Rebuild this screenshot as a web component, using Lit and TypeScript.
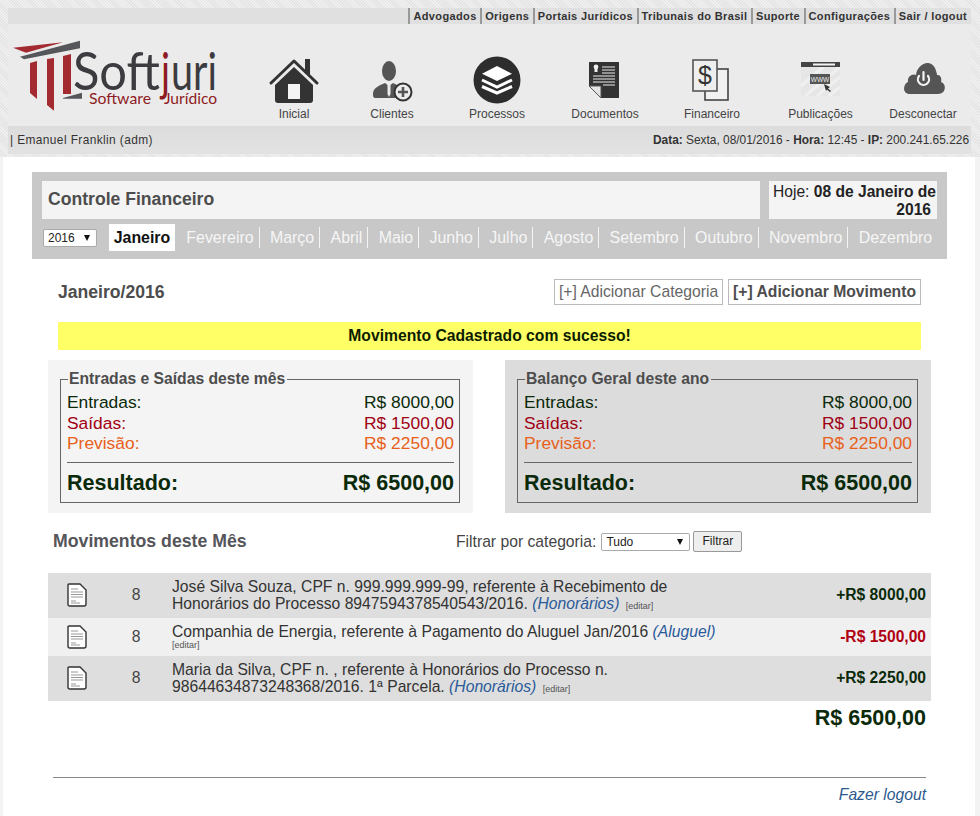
import { LitElement, html, css, svg } from 'lit';
import { customElement } from 'lit/decorators.js';

const topLinks = ['Advogados', 'Origens', 'Portais Jurídicos', 'Tribunais do Brasil', 'Suporte', 'Configurações', 'Sair / logout'];
const months = ['Fevereiro', 'Março', 'Abril', 'Maio', 'Junho', 'Julho', 'Agosto', 'Setembro', 'Outubro', 'Novembro', 'Dezembro'];

const logo = svg`
   <svg class="logo" viewBox="0 30 240 90" width="240" height="90">
      <polygon points="13,47.7 63,42.3 26,52.7" fill="#a32a30" />
      <polygon points="20,56.7 80,40.7 80,48.3 24,59.3" fill="#55565a" />
      <polygon points="30,63 37,61 37,99 30,93" fill="#a32a30" />
      <polygon points="47,59 54,58 54,110.7 47,105" fill="#a32a30" />
      <polygon points="63,56 71,54 71,94 63,94" fill="#a32a30" />
      <polygon points="63,98 82,92.7 82,98.7 63,98.7" fill="#55565a" />
      <g font-family="Lato, 'Open Sans', sans-serif" font-weight="400">
         <text x="73" y="90" font-size="53" fill="#3c3c40" textLength="87" lengthAdjust="spacingAndGlyphs">Soft</text>
         <text x="161" y="90" font-size="53" fill="#8e1c24" textLength="9" lengthAdjust="spacingAndGlyphs">j</text>
         <text x="171" y="90" font-size="53" fill="#3c3c40" textLength="46" lengthAdjust="spacingAndGlyphs">uri</text>
         <text x="89" y="103.5" font-size="16" fill="#8e1c24" textLength="62" lengthAdjust="spacingAndGlyphs">Software</text>
         <text x="164" y="103.5" font-size="16" fill="#8e1c24" textLength="53" lengthAdjust="spacingAndGlyphs">Jurídico</text>
      </g>
   </svg>
`;

// all nav icons use a 60x50 box, centred over the label
const navIcons = {
   home: svg`
      <path d="M7 29 L30 7 L53 29" fill="none" stroke="#333" stroke-width="3" stroke-linecap="round" stroke-linejoin="round" />
      <rect x="41" y="5" width="5" height="15" fill="#333" />
      <path d="M30 13 L49 31 V46 Q49 49 46 49 H14 Q11 49 11 46 V31 Z" fill="#333" />
      <rect x="24" y="30" width="12" height="15" fill="#f4f4f4" />
   `,
   client: svg`
      <ellipse cx="27" cy="17" rx="7" ry="10" fill="#555" />
      <path d="M11 40 C11 33 19 31 23 29 L27 32 L31 29 C35 31 37 32 39 33 C34 36 33 41 34 44 H14 C11 44 11 42 11 40 Z" fill="#555" />
      <path d="M25.5 30 L28.5 30 L28.5 40 L27 43 L25.5 40 Z" fill="#ebebeb" />
      <circle cx="41" cy="38" r="8.5" fill="#ebebeb" stroke="#333" stroke-width="2" />
      <path d="M41 33 V43 M36 38 H46" stroke="#555" stroke-width="2.6" />
   `,
   process: svg`
      <circle cx="30" cy="26" r="23.5" fill="#2d2d2d" />
      <polygon points="30,12 45,19.7 30,27 15,19.7" fill="#fff" />
      <polyline points="15,26 30,33 45,26" fill="none" stroke="#fff" stroke-width="3" />
      <polyline points="15,32.5 30,39 45,32.5" fill="none" stroke="#fff" stroke-width="3" />
   `,
   doc: svg`
      <g transform="translate(-1 -1)">
         <polygon points="15,9 45,9 45,45 27,45 15,33" fill="#333" />
         <polygon points="15,33 27,33 27,45" fill="#e4e4e4" stroke="#555" stroke-width="1" />
         <circle cx="22" cy="14" r="2.4" fill="#eee" />
         <rect x="20.5" y="16" width="3" height="3" fill="#eee" />
         <path d="M28 14 H41 M28 17 H41 M28 20 H41 M19 23 H41 M19 26 H41 M19 29 H41 M29 32 H41" stroke="#eee" stroke-width="1.1" />
      </g>
   `,
   money: svg`
      <rect x="23" y="15" width="23" height="31" fill="#f1f1f1" stroke="#444" stroke-width="1.6" />
      <rect x="11" y="6" width="24" height="31" fill="#eee" stroke="#555" stroke-width="1.6" />
      <text x="23" y="30" font-size="25" text-anchor="middle" font-family="'Liberation Sans', sans-serif" fill="#333">$</text>
   `,
   web: svg`
      <rect x="10" y="8" width="39" height="34" fill="#e6e6e6" />
      <path d="M14 42 L49 13 M10 32 L38 8 M26 42 L49 23 M38 42 L49 33" stroke="#f0f0f0" stroke-width="3" />
      <rect x="10" y="8" width="39" height="5" fill="#444" />
      <rect x="22" y="9.5" width="22" height="2" fill="#f4f4f4" />
      <rect x="19" y="20" width="20" height="10" fill="#555" />
      <text x="29" y="27.5" font-size="6.5" text-anchor="middle" font-family="'Liberation Sans', sans-serif" fill="#eee">WWW</text>
      <path d="M33 30 L39 33 L37 34.5 L40 37 L39 38 L36 35.5 L35 37 Z" fill="#333" />
   `,
   cloud: svg`
      <path d="M17 40 C9 40 10 30 15 28 C14 22 20 19 23 21 C24 10 37 4 42 14 C43 17 44 19 44 21 C48 20 49 26 48 28 C54 30 53 40 45 40 Z" fill="#555" />
      <path d="M26 22 A5.6 5.6 0 1 0 35 22" fill="none" stroke="#f4f4f4" stroke-width="2.2" stroke-linecap="round" />
      <path d="M30.5 18 V26" stroke="#f4f4f4" stroke-width="2.2" stroke-linecap="round" />
   `,
};

const navItems = [
   { label: 'Inicial', icon: navIcons.home },
   { label: 'Clientes', icon: navIcons.client },
   { label: 'Processos', icon: navIcons.process },
   { label: 'Documentos', icon: navIcons.doc },
   { label: 'Financeiro', icon: navIcons.money },
   { label: 'Publicações', icon: navIcons.web },
   { label: 'Desconectar', icon: navIcons.cloud },
];

const rowIcon = svg`
   <svg class="row-icon" viewBox="0 0 22 26" width="22" height="26">
      <path d="M3 2 H14 L20 8 V22 Q20 24 18 24 H4 Q2 24 2 22 V3 Q2 2 3 2 Z" fill="#fff" stroke="#333" stroke-width="1.4" />
      <path d="M5 7 H12 M5 10 H17 M5 12.5 H17 M5 15 H17 M5 19 H10 M5 21 H14" stroke="#999" stroke-width="1.1" />
   </svg>
`;

// first is the line above the one that carries the category, when there are two
const moves = [
   { first: 'José Silva Souza, CPF n. 999.999.999-99, referente à Recebimento de', text: 'Honorários do Processo 8947594378540543/2016.', cat: 'Honorários', value: '+R$ 8000,00', out: false },
   { first: '', text: 'Companhia de Energia, referente à Pagamento do Aluguel Jan/2016', cat: 'Aluguel', value: '-R$ 1500,00', out: true },
   { first: 'Maria da Silva, CPF n. , referente à Honorários do Processo n.', text: '98644634873248368/2016. 1ª Parcela.', cat: 'Honorários', value: '+R$ 2250,00', out: false },
];

@customElement('app-root')
export class AppRoot extends LitElement {
   static styles = css`
      :host {
         display: block;
         width: 980px;
         min-height: 816px;
         background-color: #f3f3f3;
         font-family: 'Liberation Sans', Arial, sans-serif;
         font-size: 15.7px;
         color: #333;
      }
      .header-wrap {
         padding: 8px 9px 3px 8px;
         background: repeating-linear-gradient(45deg, #e4e4e4 0 1px, #f0f0f0 1px 2px);
      }
      .top-links {
         display: flex;
         justify-content: flex-end;
         height: 16px;
         padding-right: 0.5px;
         background-color: #e0e0e0;
      }
      .top-links a {
         padding: 0 3.5px 0 3px;
         border-left: 2px solid #999;
         font-size: 11px;
         font-weight: bold;
         letter-spacing: 0.36px;
         line-height: 16px;
         color: #333;
      }
      .main-head {
         display: flex;
         height: 102px;
         background-color: #ebebeb;
      }
      .logo {
         display: block;
         flex: none;
         margin: 6px 5px 0 -8px;
      }
      .nav {
         flex: none;
         display: grid;
         grid-template-columns: 98px 98px 112px 104px 110px 107px 98px;
      }
      .nav-item {
         display: flex;
         flex-direction: column;
         align-items: center;
         font-size: 12px;
         color: #444;
      }
      .nav-item svg {
         display: block;
         margin-top: 30px;
         margin-bottom: 3px;
      }
      .user-bar {
         display: flex;
         justify-content: space-between;
         align-items: center;
         height: 28px;
         padding: 0 2px;
         background: linear-gradient(#dcdcdc, #e2e2e2);
         font-size: 11.9px;
         color: #333;
      }
      .user-name {
         letter-spacing: 0.4px;
      }
      .content {
         margin: 0 5px 0 3px;
         padding: 15px 44px 0 45px;
         background-color: #fff;
         height: 659px;
         box-sizing: border-box;
      }
      .card {
         margin: 0 -16px;
         padding: 9px 10px 8px 10px;
         background-color: #c8c8c8;
      }
      .card-top {
         display: flex;
         gap: 9px;
      }
      .card-title {
         flex: 1;
         height: 38px;
         padding-left: 6px;
         background-color: #f4f4f4;
         font-size: 17.6px;
         font-weight: bold;
         line-height: 36px;
         color: #4d4d4d;
      }
      .card-today {
         width: 163px;
         height: 36px;
         padding: 2px 1px 0 4px;
         background-color: #f4f4f4;
         font-size: 15.6px;
         line-height: 18px;
         text-align: right;
         color: #222;
      }
      .card-today span {
         display: block;
         padding-right: 5px;
         font-weight: bold;
      }
      .card-today div {
         white-space: nowrap;
      }
      .months {
         display: flex;
         align-items: center;
         height: 27px;
         margin-top: 5px;
         padding-left: 1px;
      }
      .fake-select {
         position: relative;
         flex: none;
         display: block;
         box-sizing: border-box;
         height: 18px;
         background-color: #fff;
         border: 1px solid #aaa;
         border-radius: 2px;
         font-size: 12px;
         line-height: 16px;
         padding-left: 4px;
         color: #222;
      }
      .fake-select::after {
         content: '';
         position: absolute;
         right: 6px;
         top: 5px;
         border-left: 3.5px solid transparent;
         border-right: 3.5px solid transparent;
         border-top: 6px solid #111;
      }
      .year {
         width: 54px;
         margin-right: 12px;
      }
      .tab {
         flex: none;
         width: 66px;
         height: 27px;
         margin-right: 1px;
         background-color: #fff;
         font-weight: bold;
         font-size: 15.9px;
         line-height: 28px;
         text-align: center;
         color: #111;
      }
      .month {
         flex: none;
         height: 21px;
         padding: 0 5px 0 10.3px;
         border-right: 1px solid #f4f4f4;
         font-size: 15.95px;
         line-height: 22px;
         color: #f6f6f6;
      }
      .month:last-child {
         border-right: none;
      }
      .period {
         display: flex;
         justify-content: space-between;
         align-items: center;
         height: 26px;
         margin: 20px 10px 0 10px;
      }
      .period h2 {
         margin: 0;
         font-size: 17.6px;
         color: #4d4d4d;
      }
      .actions {
         display: flex;
         gap: 5px;
      }
      .action {
         box-sizing: border-box;
         height: 26px;
         padding: 0 4px;
         border: 1px solid #bbb;
         font-size: 15.7px;
         line-height: 24px;
         color: #666;
      }
      .action.strong {
         font-weight: bold;
         color: #4d4d4d;
      }
      .notice {
         height: 28px;
         margin: 17px 10px 0 10px;
         background-color: #ffff66;
         font-size: 15.7px;
         font-weight: bold;
         line-height: 27px;
         text-align: center;
         color: #0c1c00;
      }
      .panels {
         display: flex;
         justify-content: space-between;
         margin-top: 10px;
      }
      .panel {
         width: 425px;
         box-sizing: border-box;
         padding: 10px 13px 10px 12px;
         background-color: #f4f4f4;
      }
      .panel.dark {
         width: 426px;
         background-color: #dcdcdc;
      }
      fieldset {
         margin: 0;
         min-width: 0;
         padding: 6px 5px 4px 6px;
         border: 1.5px solid #666;
      }
      legend {
         padding: 0 2px 0 1px;
         margin-left: 1px;
         margin-bottom: -2px;
         font-size: 15.7px;
         font-weight: bold;
         line-height: 18.1px;
         color: #4d4d4d;
      }
      .line {
         display: flex;
         justify-content: space-between;
         font-size: 17.4px;
         line-height: 20.5px;
      }
      .in {
         color: #0a2a0a;
      }
      .out {
         color: #a00012;
      }
      .plan {
         color: #e8601a;
      }
      .result {
         display: flex;
         justify-content: space-between;
         margin-top: 8px;
         padding-top: 5px;
         border-top: 1px solid #666;
         font-size: 21.5px;
         font-weight: bold;
         line-height: 30px;
         color: #0a2a0a;
      }
      .moves-head {
         display: flex;
         align-items: center;
         height: 22px;
         margin-top: 18px;
         padding-left: 5px;
      }
      .moves-head h2 {
         flex: none;
         width: 403px;
         margin: 0;
         font-size: 17.7px;
         color: #55555a;
      }
      .filter {
         display: flex;
         align-items: center;
         font-size: 15.7px;
         color: #444;
      }
      .cat {
         width: 89px;
         margin-left: 5px;
         margin-right: 3px;
      }
      .filter-btn {
         box-sizing: border-box;
         height: 21px;
         width: 49px;
         border: 1px solid #999;
         border-radius: 2px;
         background-color: #eee;
         font-size: 12px;
         line-height: 19px;
         text-align: center;
         color: #222;
      }
      .rows {
         margin-top: 20px;
      }
      .row {
         display: grid;
         grid-template-columns: 58px 60px 6px 573px 1fr;
         background-color: #dedede;
      }
      .row.light {
         background-color: #f0f0f0;
      }
      .cell-icon {
         display: flex;
         align-items: center;
         justify-content: center;
      }
      .row-icon {
         display: block;
      }
      .cell-num {
         align-self: center;
         text-align: center;
         color: #444;
      }
      .cell-text {
         grid-column: 4;
         padding: 5px 0 5.2px 0;
         line-height: 17.4px;
         color: #333;
      }
      .cell-text em {
         color: #2a5a9a;
      }
      .edit {
         font-size: 9px;
         line-height: 1;
         color: #555;
         margin-left: 2px;
      }
      .row.light .cell-text {
         padding-bottom: 4.6px;
      }
      .row.light .edit {
         display: block;
         margin-left: 0;
         line-height: 11px;
      }
      .cell-value {
         align-self: center;
         padding-right: 5px;
         font-size: 15.6px;
         font-weight: bold;
         text-align: right;
         color: #0a2a0a;
      }
      .cell-value.neg {
         color: #b00012;
      }
      .total {
         padding-right: 5px;
         margin-top: 2px;
         font-size: 21.5px;
         font-weight: bold;
         line-height: 30px;
         text-align: right;
         color: #0a2a0a;
      }
      .foot {
         margin: 44px 5px 0 5px;
         padding-top: 8px;
         border-top: 1px solid #888;
         font-style: italic;
         text-align: right;
         color: #2d5a8e;
      }
   `;

   renderPanel(title: string, dark: boolean) {
      return html`
         <div class="panel ${dark ? 'dark' : ''}">
            <fieldset>
               <legend>${title}</legend>
               <div class="line in"><span>Entradas:</span><span>R$ 8000,00</span></div>
               <div class="line out"><span>Saídas:</span><span>R$ 1500,00</span></div>
               <div class="line plan"><span>Previsão:</span><span>R$ 2250,00</span></div>
               <div class="result"><span>Resultado:</span><span>R$ 6500,00</span></div>
            </fieldset>
         </div>
      `;
   }

   render() {
      return html`
         <div class="header-wrap">
            <div class="top-links">
               ${topLinks.map((l) => html`<a>${l}</a>`)}
            </div>
            <div class="main-head">
               ${logo}
               <div class="nav">
                  ${navItems.map((n) => html`
                     <div class="nav-item">
                        <svg viewBox="0 0 60 50" width="60" height="50">${n.icon}</svg>
                        ${n.label}
                     </div>
                  `)}
               </div>
            </div>
            <div class="user-bar">
               <span class="user-name">| Emanuel Franklin (adm)</span>
               <span><b>Data:</b> Sexta, 08/01/2016 - <b>Hora:</b> 12:45 - <b>IP:</b> 200.241.65.226</span>
            </div>
         </div>
         <div class="content">
            <div class="card">
               <div class="card-top">
                  <div class="card-title">Controle Financeiro</div>
                  <div class="card-today">
                     <div>Hoje: <b>08 de Janeiro de</b></div>
                     <span>2016</span>
                  </div>
               </div>
               <div class="months">
                  <div class="fake-select year">2016</div>
                  <div class="tab">Janeiro</div>
                  ${months.map((m) => html`<div class="month">${m}</div>`)}
               </div>
            </div>
            <div class="period">
               <h2>Janeiro/2016</h2>
               <div class="actions">
                  <div class="action">[+] Adicionar Categoria</div>
                  <div class="action strong">[+] Adicionar Movimento</div>
               </div>
            </div>
            <div class="notice">Movimento Cadastrado com sucesso!</div>
            <div class="panels">
               ${this.renderPanel('Entradas e Saídas deste mês', false)}
               ${this.renderPanel('Balanço Geral deste ano', true)}
            </div>
            <div class="moves-head">
               <h2>Movimentos deste Mês</h2>
               <div class="filter">
                  Filtrar por categoria:
                  <div class="fake-select cat">Tudo</div>
                  <div class="filter-btn">Filtrar</div>
               </div>
            </div>
            <div class="rows">
               ${moves.map((m, i) => html`
                  <div class="row ${i === 1 ? 'light' : ''}">
                     <div class="cell-icon">${rowIcon}</div>
                     <div class="cell-num">8</div>
                     <div class="cell-text">
                        ${m.first ? html`<div>${m.first}</div>` : ''}
                        <div>${m.text} <em>(${m.cat})</em> <span class="edit">[editar]</span></div>
                     </div>
                     <div class="cell-value ${m.out ? 'neg' : ''}">${m.value}</div>
                  </div>
               `)}
            </div>
            <div class="total">R$ 6500,00</div>
            <div class="foot">Fazer logout</div>
         </div>
      `;
   }
}
